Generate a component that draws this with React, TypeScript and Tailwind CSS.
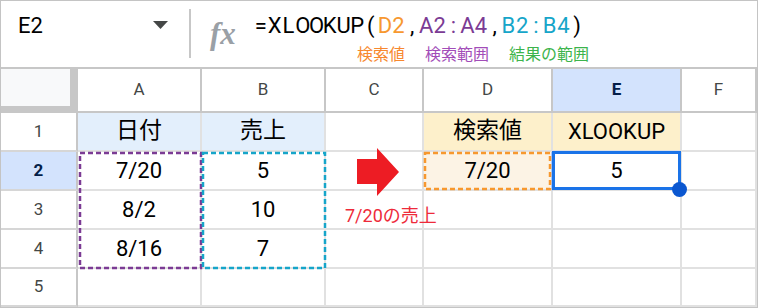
import React from 'react';

type CellDef = { text?: string; size?: string; bg?: string; edge?: string };

const COL = ['col-start-1', 'col-start-2', 'col-start-3', 'col-start-4', 'col-start-5', 'col-start-6', 'col-start-7'];
const ROW = ['row-start-1', 'row-start-2', 'row-start-3', 'row-start-4', 'row-start-5', 'row-start-6'];

const LETTERS = ['A', 'B', 'C', 'D', 'E', 'F'];

const CJK = 'text-[23px]';
const NUM = 'text-[22px]';

const body: CellDef[][] = [
  [
    { text: '日付', size: CJK, bg: 'bg-[#e3effc]' },
    { text: '売上', size: CJK, bg: 'bg-[#e3effc]' },
    {},
    { text: '検索値', size: CJK, bg: 'bg-[#fdf0cb]' },
    { text: 'XLOOKUP', size: NUM, bg: 'bg-[#fdf0cb]' },
    {},
  ],
  [
    { text: '7/20', size: NUM },
    { text: '5', size: NUM },
    {},
    { text: '7/20', size: NUM, bg: 'bg-[#fcf3e5]', edge: 'border-r-[#a8c7fa]' },
    { text: '5', size: NUM },
    {},
  ],
  [{ text: '8/2', size: NUM }, { text: '10', size: NUM }, {}, {}, {}, {}],
  [{ text: '8/16', size: NUM }, { text: '7', size: NUM }, {}, {}, {}, {}],
  [{}, {}, {}, {}, {}, {}],
];

// formula pieces, coloured like the ranges they point at
const formula: [string, string][] = [
  ['=XLOOKUP(', 'text-black'],
  ['D2', 'text-[#f7982f]'],
  [',', 'text-black'],
  ['A2:A4', 'text-[#7b3b94]'],
  [',', 'text-black'],
  ['B2:B4', 'text-[#16a5c9]'],
  [')', 'text-black'],
];

const labels: [string, string][] = [
  ['検索値', 'text-[#f7882f]'],
  ['検索範囲', 'text-[#a24db8]'],
  ['結果の範囲', 'text-[#3cb44c]'],
];

const FormulaBar: React.FC = () => {
  const chars = formula.flatMap(([s, cls]) => s.split('').map(ch => ({ ch, cls })));
  return (
    <div className="flex h-[68px] border-b-2 border-[#c7c7c7]">
      <div className="w-[188px] h-[48px] flex items-center justify-between pl-[17px] pr-[21px]">
        <span className="text-[22px] text-black">E2</span>
        <svg width="15" height="8" viewBox="0 0 15 8">
          <polygon points="0,0 15,0 7.5,8" fill="#444746" />
        </svg>
      </div>
      <div className="w-[2px] h-[49px] mt-[8px] bg-[#c7c7c7]" />
      <div className="w-[61px] pl-[19px]">
        <span className="block mt-[18px] leading-[30px] text-[31px] italic font-bold text-[#9aa0a6] font-['Liberation_Serif',serif]">
          fx
        </span>
      </div>
      <div className="flex flex-col">
        <div className="flex mt-[11px] ml-[2px] h-[28px] items-center text-[22px] leading-[28px]">
          {chars.map((c, i) => (
            <span key={i} className={`inline-block w-[13.75px] text-center ${c.cls}`}>
              {c.ch}
            </span>
          ))}
        </div>
        <div className="flex gap-[20px] ml-[105px] mt-[5px] text-[16px] leading-[20px]">
          {labels.map(([t, cls]) => (
            <span key={t} className={cls}>{t}</span>
          ))}
        </div>
      </div>
    </div>
  );
};

const Sheet: React.FC = () => {
  return (
    <div className="grid grid-cols-[77px_124px_124px_98px_129px_129px_1fr] grid-rows-[44px_39px_39px_39px_39px_1fr] h-[238px]">
      {/* corner with frozen-pane bars */}
      <div className={`${COL[0]} ${ROW[0]} bg-[#f8f9fa] border-r-[8px] border-b-[7px] border-[#c7c7c7]`} />

      {LETTERS.map((l, i) => {
        const active = l === 'E';
        return (
          <div
            key={l}
            className={`${COL[i + 1]} ${ROW[0]} flex items-center justify-center border-r-2 border-b-2 border-[#c7c7c7] text-[17px] ${
              active ? 'bg-[#d3e3fd] text-[#041e49] font-bold' : 'bg-white text-[#444746]'
            }`}
          >
            {l}
          </div>
        );
      })}

      {body.map((row, r) => {
        const active = r === 1;
        return (
          <React.Fragment key={r}>
            <div
              className={`${COL[0]} ${ROW[r + 1]} flex items-center justify-center border-r-2 border-b-2 border-r-[#c7c7c7] border-b-[#d6d6d6] text-[17px] ${
                active ? 'bg-[#d3e3fd] text-[#041e49] font-bold' : 'bg-white text-[#444746]'
              }`}
            >
              {r + 1}
            </div>
            {row.map((cell, c) => (
              <div
                key={c}
                className={`${COL[c + 1]} ${ROW[r + 1]} flex items-center justify-center border-r-2 border-b-2 border-[#e1e1e1] ${cell.edge ?? ''} ${cell.bg ?? ''} ${cell.size ?? ''} text-black`}
              >
                {cell.text}
              </div>
            ))}
          </React.Fragment>
        );
      })}

      {/* lookup range A2:A4 */}
      <div className={`${COL[1]} ${ROW[2]} row-span-3 z-10 pointer-events-none`}>
        <svg width="124" height="117" className="overflow-visible">
          <rect x="2" y="1" width="121" height="115" fill="none" stroke="#7b3b94" strokeWidth="2.5" strokeDasharray="5 3" />
        </svg>
      </div>

      {/* result range B2:B4 */}
      <div className={`${COL[2]} ${ROW[2]} row-span-3 z-10 pointer-events-none`}>
        <svg width="124" height="117" className="overflow-visible">
          <rect x="1" y="1" width="122" height="115" fill="none" stroke="#16a5c9" strokeWidth="2.5" strokeDasharray="5 3" />
        </svg>
      </div>

      {/* search value D2 */}
      <div className={`${COL[4]} ${ROW[2]} z-10 pointer-events-none`}>
        <svg width="129" height="39" className="overflow-visible">
          <rect x="1" y="1" width="125" height="36" fill="none" stroke="#f7982f" strokeWidth="2.5" strokeDasharray="5 3" />
        </svg>
      </div>

      {/* arrow */}
      <div className={`${COL[3]} ${ROW[2]} z-10 flex items-center justify-center pl-[6px] overflow-visible`}>
        <svg width="42" height="48" viewBox="0 0 42 48" className="shrink-0 overflow-visible">
          <polygon points="0,11 20,11 20,0 42,24 20,48 20,36 0,36" fill="#ed1c24" />
        </svg>
      </div>

      {/* caption */}
      <div className={`${COL[3]} ${ROW[3]} z-10 pl-[19px] pt-[15px] whitespace-nowrap text-[18px] leading-[20px] text-[#ee2a3a]`}>
        7/20の売上
      </div>

      {/* selected cell E2 */}
      <div className={`${COL[5]} ${ROW[2]} z-20 relative -mt-px -ml-px mb-px mr-px border-[3px] border-[#1a73e8] pointer-events-none`}>
        <div className="absolute -right-[9px] -bottom-[10px] w-[15px] h-[15px] rounded-full bg-[#0b57d0]" />
      </div>
    </div>
  );
};

export default function App() {
  return (
    <div className="w-[758px] h-[308px] overflow-hidden bg-white border border-[#c4c4c4] font-['Roboto','Noto_Sans_CJK_JP',sans-serif]">
      <FormulaBar />
      <Sheet />
    </div>
  );
}
